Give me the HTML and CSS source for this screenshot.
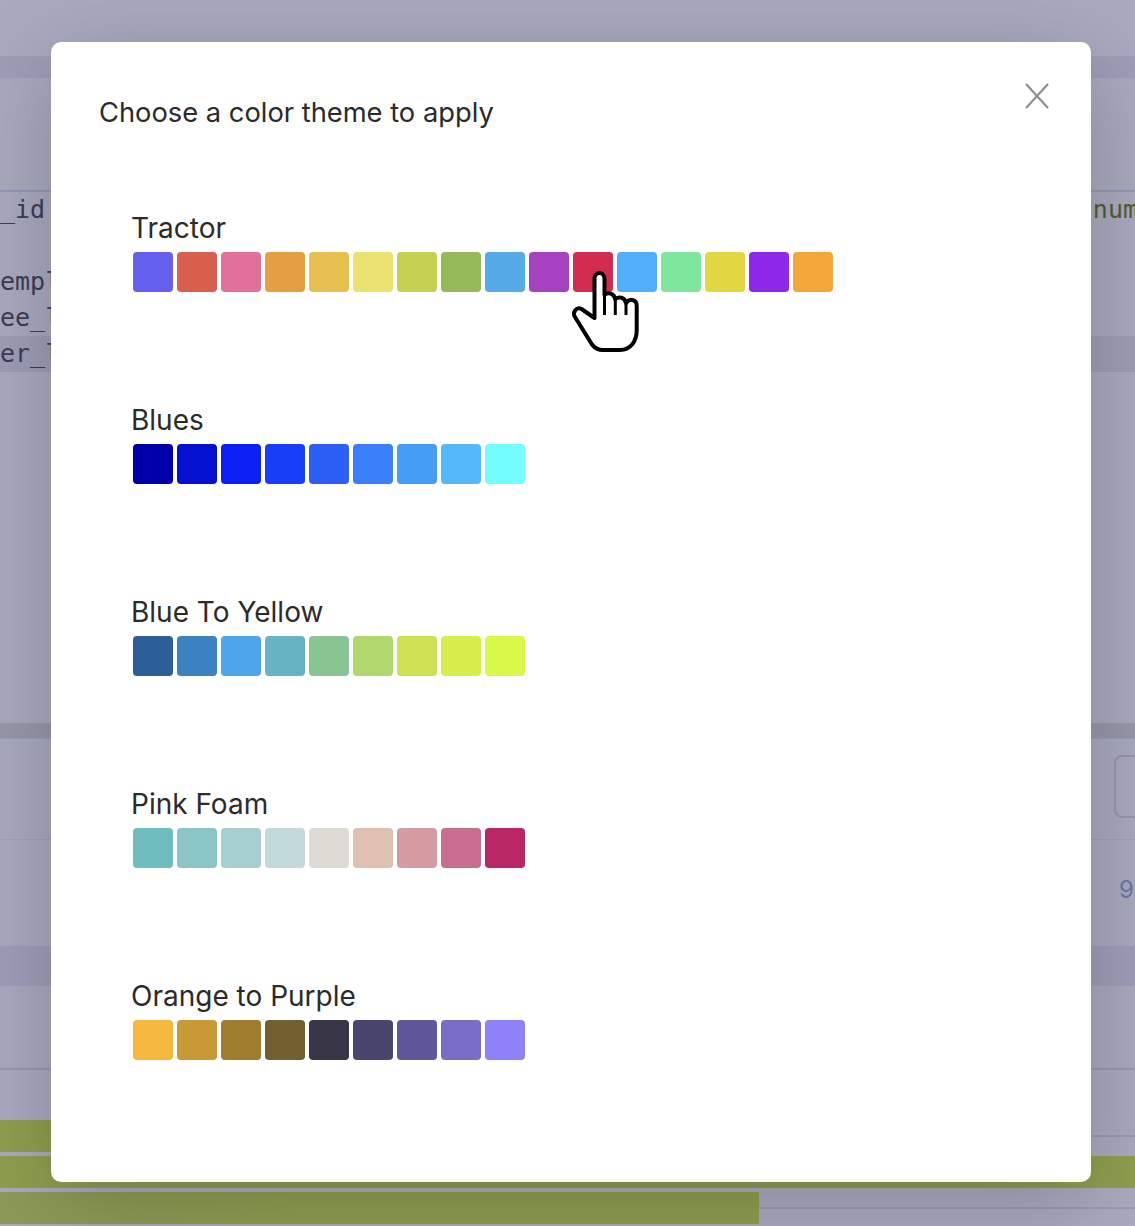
FILE: index.html
```html
<!DOCTYPE html>
<html lang="en">
<head>
  <meta charset="UTF-8" />
  <meta name="viewport" content="width=device-width, initial-scale=1" />
  <title>Choose a color theme</title>
  <link rel="stylesheet" href="styles.css">
</head>
<body>

  <div class="page">
    <div class="band top"></div>
    <div class="band head"></div>
    <div class="band intro"></div>

    <div class="code">
      <div class="code-line"><span>_id</span><span class="green">num</span></div>
      <div class="code-line"></div>
      <div class="code-line"><span>empl</span></div>
      <div class="code-line"><span>ee_l</span></div>
      <div class="code-line shaded"><span>er_l</span></div>
    </div>

    <div class="band blank"></div>
    <div class="band divider"></div>
    <div class="band toolbar"><div class="ghost-button"></div></div>
    <div class="band number-row"><span>9</span></div>
    <div class="band subhead"></div>
    <div class="band gap-a"></div>
    <div class="band gap-b"></div>

    <div class="bars">
      <div class="track"><div class="bar bar-short"></div></div>
      <div class="track"><div class="bar bar-full"></div></div>
      <div class="track"><div class="bar bar-mid"></div></div>
    </div>
  </div>

  <div class="modal">
    <div class="modal-header">
      <h2>Choose a color theme to apply</h2>
      <svg class="close" viewBox="0 0 24 26" width="24" height="26">
        <path d="M1 1 L23 25 M23 1 L1 25" />
      </svg>
    </div>

    <div class="theme">
      <div class="theme-name">Tractor</div>
      <div class="swatches">
        <div class="swatch" style="background:#6560ee"></div>
        <div class="swatch" style="background:#d9604c"></div>
        <div class="swatch" style="background:#e2719a"></div>
        <div class="swatch" style="background:#e49f42"></div>
        <div class="swatch" style="background:#e6bf50"></div>
        <div class="swatch" style="background:#ebe16f"></div>
        <div class="swatch" style="background:#c3d050"></div>
        <div class="swatch" style="background:#94bb57"></div>
        <div class="swatch" style="background:#55abe8"></div>
        <div class="swatch" style="background:#a642c0"></div>
        <div class="swatch" style="background:#d32c50"></div>
        <div class="swatch" style="background:#52aefb"></div>
        <div class="swatch" style="background:#7fe79b"></div>
        <div class="swatch" style="background:#e3d643"></div>
        <div class="swatch" style="background:#8f27ea"></div>
        <div class="swatch" style="background:#f4a73a"></div>
      </div>
    </div>

    <div class="theme">
      <div class="theme-name">Blues</div>
      <div class="swatches">
        <div class="swatch" style="background:#0000aa"></div>
        <div class="swatch" style="background:#0411d0"></div>
        <div class="swatch" style="background:#0b20f5"></div>
        <div class="swatch" style="background:#1a3df8"></div>
        <div class="swatch" style="background:#2b5ff5"></div>
        <div class="swatch" style="background:#3a7ff8"></div>
        <div class="swatch" style="background:#459df5"></div>
        <div class="swatch" style="background:#55b8fa"></div>
        <div class="swatch" style="background:#73fdff"></div>
      </div>
    </div>

    <div class="theme">
      <div class="theme-name">Blue To Yellow</div>
      <div class="swatches">
        <div class="swatch" style="background:#2c5f98"></div>
        <div class="swatch" style="background:#3d82c0"></div>
        <div class="swatch" style="background:#4fa5ec"></div>
        <div class="swatch" style="background:#68b3c3"></div>
        <div class="swatch" style="background:#89c593"></div>
        <div class="swatch" style="background:#b1d86e"></div>
        <div class="swatch" style="background:#cde252"></div>
        <div class="swatch" style="background:#d5ee4a"></div>
        <div class="swatch" style="background:#d8f84a"></div>
      </div>
    </div>

    <div class="theme">
      <div class="theme-name">Pink Foam</div>
      <div class="swatches">
        <div class="swatch" style="background:#6fbcbe"></div>
        <div class="swatch" style="background:#8ac6c8"></div>
        <div class="swatch" style="background:#a6cfd1"></div>
        <div class="swatch" style="background:#c2d9da"></div>
        <div class="swatch" style="background:#dedbd5"></div>
        <div class="swatch" style="background:#dfbfb0"></div>
        <div class="swatch" style="background:#d49ca2"></div>
        <div class="swatch" style="background:#c86d8d"></div>
        <div class="swatch" style="background:#b82664"></div>
      </div>
    </div>

    <div class="theme">
      <div class="theme-name">Orange to Purple</div>
      <div class="swatches">
        <div class="swatch" style="background:#f5b73e"></div>
        <div class="swatch" style="background:#c89a35"></div>
        <div class="swatch" style="background:#9e7d2f"></div>
        <div class="swatch" style="background:#736030"></div>
        <div class="swatch" style="background:#393648"></div>
        <div class="swatch" style="background:#49456f"></div>
        <div class="swatch" style="background:#5f5799"></div>
        <div class="swatch" style="background:#7a6dc8"></div>
        <div class="swatch" style="background:#8f82f8"></div>
      </div>
    </div>
  </div>

  <!-- mouse pointer over the red swatch -->
  <svg class="pointer" viewBox="0 0 80 95" width="80" height="95">
    <path class="hand" d="M29.500 53 L29.500 14 C29.500 6 39.500 6 39.500 14 L39.500 30 C43 27 49 28 50.300 34.300 C53 31 60 32 61 38.300 C64 33 71.700 34 71.700 41 L71.700 65 C71.700 77 65 85 55 85 L38 85 C33 85 30 83.500 27 79.500 L10 52 C7 47 11.500 41.500 16.500 44 Z" />
    <path class="hand-lines" d="M39.500 30 L39.500 50 M50.300 34.300 L50.300 50 M61 38.300 L61 50" />
  </svg>

</body>
</html>
```

FILE: styles.css
```css
body {
  margin: 0;
  background: #a9aabf;
  font-family: Inter, "Noto Sans", sans-serif;
}
.page {
  height: 1226px;
  overflow: hidden;
}
.band.top {
  height: 56px;
  border-bottom: 2px solid #9f9fb6;
}
.band.head {
  height: 20px;
  background: #9e9fb7;
}
.band.intro {
  height: 112px;
  border-bottom: 2px solid #959ab8;
}
.code {
  font-family: "DejaVu Sans Mono", monospace;
  font-size: 25px;
  color: #3c3d55;
}
.code-line {
  display: flex;
  justify-content: space-between;
  height: 36px;
  line-height: 36px;
}
.code-line.shaded {
  background: #9e9eb6;
}
.green {
  color: #515c32;
  margin-right: -3px;
}
.band.blank {
  height: 351px;
}
.band.divider {
  height: 16px;
  background: #9798ab;
  border-bottom: 1px solid #9a9fbb;
  box-sizing: border-box;
}
.band.toolbar {
  display: flex;
  justify-content: flex-end;
  align-items: flex-start;
  padding-top: 16px;
  box-sizing: border-box;
  height: 101px;
  border-bottom: 1px solid #a1a2b7;
}
.ghost-button {
  width: 60px;
  height: 59px;
  margin-right: -43px;
  border: 2px solid #9898ae;
  border-radius: 8px;
}
.band.number-row {
  display: flex;
  justify-content: flex-end;
  align-items: center;
  box-sizing: border-box;
  height: 106px;
  padding: 0 1px 8px 0;
  font-size: 24px;
  color: #6a7aa6;
}
.band.subhead {
  height: 40px;
  background: #9e9fb8;
}
.band.gap-a {
  height: 82px;
  border-bottom: 2px solid #9a9aae;
}
.band.gap-b {
  height: 50px;
}
.bars {
  display: flex;
  flex-direction: column;
  gap: 4px;
}
.track {
  height: 32px;
  background: linear-gradient(#0000 15px, #9a9bb0 15px, #9a9bb0 17px, #0000 17px);
}
.bar {
  height: 32px;
  background: #8e9f4f;
}
.bar-short {
  width: 500px;
}
.bar-full {
  width: 100%;
}
.bar-mid {
  width: 759px;
  background: linear-gradient(90deg, #8c9a5a, #8e9f4f 300px);
}

.modal {
  position: absolute;
  left: 51px;
  top: 42px;
  width: 1040px;
  height: 1140px;
  box-sizing: border-box;
  padding: 40px 42px 0 48px;
  background: white;
  border-radius: 10px;
  box-shadow: 0 20px 90px rgba(0,0,0,0.22);
}
.modal-header {
  display: flex;
  justify-content: space-between;
  align-items: flex-start;
  margin-bottom: 79px;
}
.modal-header h2 {
  margin: 0;
  padding-top: 12px;
  font-size: 27.300px;
  line-height: 38px;
  font-weight: 400;
  color: #2b2b2b;
}
.close {
  margin-top: 1px;
}
.close path {
  stroke: #8f8f8f;
  stroke-width: 2.2;
  fill: none;
}
.theme {
  margin-left: 32px;
  height: 192px;
}
.theme-name {
  font-size: 28px;
  line-height: 34px;
  color: #2b2b2b;
  font-kerning: normal;
}
.swatches {
  display: flex;
  gap: 4px;
  margin: 7px 0 0 2px;
}
.swatch {
  width: 40px;
  height: 40px;
  border-radius: 4px;
}
.pointer {
  position: absolute;
  left: 565px;
  top: 265px;
}
.hand {
  fill: white;
  stroke: black;
  stroke-width: 4;
  stroke-linejoin: round;
}
.hand-lines {
  fill: none;
  stroke: black;
  stroke-width: 3;
}
```
